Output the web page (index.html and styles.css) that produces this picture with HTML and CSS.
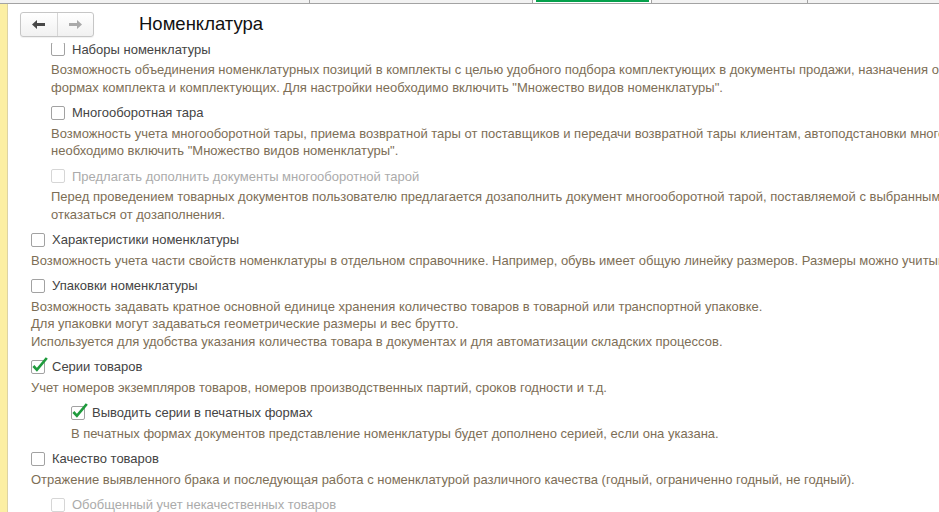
FILE: index.html
```html
<!DOCTYPE html>
<html lang="ru">
<head>
<meta charset="utf-8">
<title>Номенклатура</title>
<link rel="stylesheet" href="styles.css">
</head>
<body>
<div class="tabs">
  <div class="tab t1"></div>
  <div class="tab t2"></div>
  <div class="tab t3"><span class="tab-mark"></span></div>
  <div class="tab t4"></div>
  <div class="tab t5"></div>
</div>
<div class="main">
  <div class="side"></div>
  <div class="panel">
    <div class="header">
      <div class="nav">
        <span class="nav-btn back"><svg width="13" height="9" viewBox="0 0 13 9"><path d="M0 4.5 L5 0 L5 3 L13 3 L13 6 L5 6 L5 9 Z" fill="#484848"/></svg></span>
        <span class="nav-btn fwd"><svg width="13" height="9" viewBox="0 0 13 9"><path d="M13 4.5 L8 0 L8 3 L0 3 L0 6 L8 6 L8 9 Z" fill="#a9a9a9"/></svg></span>
      </div>
      <div class="title">Номенклатура</div>
    </div>
    <div class="content">
      <div class="list">
        <div class="opt l1 first">
          <div class="cb-row"><span class="cb"></span><span class="lbl">Наборы номенклатуры</span></div>
          <div class="desc">Возможность объединения номенклатурных позиций в комплекты с целью удобного подбора комплектующих в документы продажи, назначения обработки в печатных<br>формах комплекта и комплектующих. Для настройки необходимо включить "Множество видов номенклатуры".</div>
        </div>
        <div class="opt l1">
          <div class="cb-row"><span class="cb"></span><span class="lbl">Многооборотная тара</span></div>
          <div class="desc">Возможность учета многооборотной тары, приема возвратной тары от поставщиков и передачи возвратной тары клиентам, автоподстановки многооборотной тары. Для настройки<br>необходимо включить "Множество видов номенклатуры".</div>
        </div>
        <div class="opt l1">
          <div class="cb-row"><span class="cb disabled"></span><span class="lbl disabled">Предлагать дополнить документы многооборотной тарой</span></div>
          <div class="desc">Перед проведением товарных документов пользователю предлагается дозаполнить документ многооборотной тарой, поставляемой с выбранными товарами. Пользователь может<br>отказаться от дозаполнения.</div>
        </div>
        <div class="opt l0">
          <div class="cb-row"><span class="cb"></span><span class="lbl">Характеристики номенклатуры</span></div>
          <div class="desc">Возможность учета части свойств номенклатуры в отдельном справочнике. Например, обувь имеет общую линейку размеров. Размеры можно учитывать как характеристики.</div>
        </div>
        <div class="opt l0">
          <div class="cb-row"><span class="cb"></span><span class="lbl">Упаковки номенклатуры</span></div>
          <div class="desc">Возможность задавать кратное основной единице хранения количество товаров в товарной или транспортной упаковке.<br>Для упаковки могут задаваться геометрические размеры и вес брутто.<br>Используется для удобства указания количества товара в документах и для автоматизации складских процессов.</div>
        </div>
        <div class="opt l0">
          <div class="cb-row"><span class="cb checked"><svg class="tick" width="18" height="18" viewBox="0 0 18 18"><polyline points="3.4,10 6.9,13.8 16.8,2" fill="none" stroke="#1f9b3d" stroke-width="2.7"/></svg></span><span class="lbl">Серии товаров</span></div>
          <div class="desc">Учет номеров экземпляров товаров, номеров производственных партий, сроков годности и т.д.</div>
        </div>
        <div class="opt l2">
          <div class="cb-row"><span class="cb checked"><svg class="tick" width="18" height="18" viewBox="0 0 18 18"><polyline points="3.4,10 6.9,13.8 16.8,2" fill="none" stroke="#1f9b3d" stroke-width="2.7"/></svg></span><span class="lbl">Выводить серии в печатных формах</span></div>
          <div class="desc">В печатных формах документов представление номенклатуры будет дополнено серией, если она указана.</div>
        </div>
        <div class="opt l0">
          <div class="cb-row"><span class="cb"></span><span class="lbl">Качество товаров</span></div>
          <div class="desc">Отражение выявленного брака и последующая работа с номенклатурой различного качества (годный, ограниченно годный, не годный).</div>
        </div>
        <div class="opt l1">
          <div class="cb-row"><span class="cb disabled"></span><span class="lbl disabled">Обобщенный учет некачественных товаров</span></div>
          <div class="desc">Учет некачественных товаров без разделения по номенклатуре.</div>
        </div>
      </div>
    </div>
  </div>
</div>
</body>
</html>
```

FILE: styles.css
```css
html, body {
  margin: 0;
  padding: 0;
}
body {
  width: 939px;
  height: 512px;
  overflow: hidden;
  background: #ffffff;
  font-family: "Liberation Sans", Arial, sans-serif;
  font-size: 13px;
  color: #4a4a4a;
}
.tabs {
  display: flex;
  height: 3px;
  background: #f2f2f2;
  border-bottom: 1px solid #a3a3a3;
}
.tab {
  box-sizing: border-box;
  height: 3px;
  border-right: 1px solid #a3a3a3;
}
.t1 { width: 310px; }
.t2 { width: 223px; }
.t3 { width: 119px; background: #ffffff; padding: 0 2px 0 3px; }
.t4 { width: 156px; }
.t5 { flex: 1; border-right: none; }
.tab-mark {
  display: block;
  height: 2px;
  background: #05a04b;
}
.main {
  display: flex;
  height: 508px;
}
.side {
  width: 7px;
  background: #fcefa3;
  border-right: 1px solid #ddd3a3;
  flex: none;
}
.panel {
  flex: 1;
  min-width: 0;
  display: flex;
  flex-direction: column;
  overflow: hidden;
}
.header {
  height: 39px;
  flex: none;
  box-sizing: border-box;
  padding: 8px 0 0 12px;
  display: flex;
  align-items: flex-start;
}
.nav {
  display: flex;
  box-sizing: border-box;
  width: 74px;
  height: 25px;
  border: 1px solid #c6c6c6;
  border-radius: 3px;
  background: linear-gradient(#ffffff, #f1f1f1);
  box-shadow: 0 1px 1px rgba(0,0,0,0.06);
}
.nav-btn {
  flex: 1;
  display: flex;
  align-items: center;
  justify-content: center;
}
.nav-btn.back {
  border-right: 1px solid #d6d6d6;
}
.title {
  margin-left: 45px;
  font-size: 18.5px;
  line-height: 24px;
  color: #111111;
}
.content {
  flex: 1;
  overflow: hidden;
}
.list {
  padding-left: 23px;
}
.opt {
  margin-bottom: 4.5px;
}
.opt.first {
  margin-top: -6px;
}
.l1 { padding-left: 20px; }
.l2 { padding-left: 40px; }
.cb-row {
  display: flex;
  align-items: center;
  height: 24px;
  white-space: nowrap;
}
.cb {
  position: relative;
  box-sizing: border-box;
  width: 14px;
  height: 14px;
  border: 1px solid #a2a2a2;
  border-radius: 2px;
  background: #ffffff;
  flex: none;
}
.cb.disabled {
  border-color: #d6d6d6;
}
.tick {
  position: absolute;
  left: -2px;
  top: -5px;
  overflow: visible;
}
.lbl {
  margin-left: 7px;
  color: #444444;
}
.lbl.disabled {
  color: #ababab;
}
.desc {
  white-space: nowrap;
  line-height: 17.5px;
  color: #7d6e56;
}
```
